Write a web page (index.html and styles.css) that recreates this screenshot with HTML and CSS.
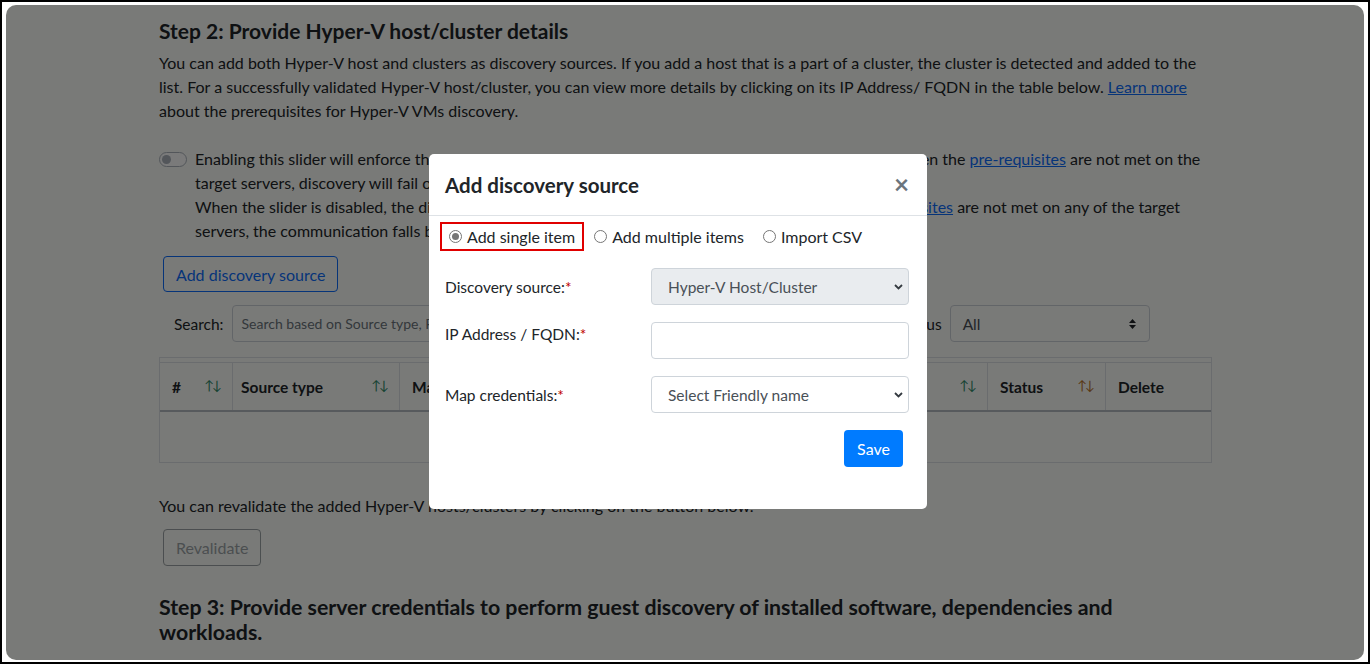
FILE: index.html
```html
<!DOCTYPE html>
<html lang="en">
<head>
<meta charset="utf-8">
<title>Add discovery source</title>
<link rel="stylesheet" href="styles.css">
</head>
<body>
<div class="frame">
  <div class="panel">
    <main class="page">
      <h2 class="step-title">Step 2: Provide Hyper-V host/cluster details</h2>
      <p class="intro">You can add both Hyper-V host and clusters as discovery sources. If you add a host that is a part of a cluster, the cluster is detected and added to the<br>list. For a successfully validated Hyper-V host/cluster, you can view more details by clicking on its IP Address/ FQDN in the table below. <a href="#">Learn more</a><br>about the prerequisites for Hyper-V VMs discovery.</p>

      <div class="toggle-row">
        <span class="switch"><span class="knob"></span></span>
        <p class="toggle-text">Enabling this slider will enforce the encrypted communication between appliance and guest servers. When the <a href="#">pre-requisites</a> are not met on the<br>target servers, discovery will fail on those servers.<br>When the slider is disabled, the discovery is attempted with encryption at first, and in case the <a href="#">pre-requisites</a> are not met on any of the target<br>servers, the communication falls back to unencrypted mode.</p>
      </div>

      <button class="btn-outline">Add discovery source</button>

      <div class="search-row">
        <span class="search-label">Search:</span>
        <div class="search-input">Search based on Source type, FQDN, Map credentials</div>
        <span class="status-label">Status</span>
        <div class="status-select">All
          <svg class="updown" width="9" height="12" viewBox="0 0 9 12"><path d="M4.5 1 L8 5 H1 Z M4.5 11 L8 7 H1 Z" fill="#212529"/></svg>
        </div>
      </div>

      <div class="table-wrap">
        <div class="thead">
          <div class="th c1"><span>#</span><span class="sort g">↑↓</span></div>
          <div class="th c2"><span>Source type</span><span class="sort g">↑↓</span></div>
          <div class="th c3"><span>Map credentials</span><span class="sort g">↑↓</span></div>
          <div class="th c4"><span>IP Address/FQDN</span><span class="sort g">↑↓</span></div>
          <div class="th c5"><span>Host count</span><span class="sort g">↑↓</span></div>
          <div class="th c6"><span>Status</span><span class="sort o">↑↓</span></div>
          <div class="th c7"><span>Delete</span></div>
        </div>
        <div class="tbody"></div>
      </div>

      <p class="reval-text">You can revalidate the added Hyper-V hosts/clusters by clicking on the button below.</p>
      <button class="btn-disabled">Revalidate</button>

      <h3 class="step3">Step 3: Provide server credentials to perform guest discovery of installed software, dependencies and<br>workloads.</h3>
    </main>

    <div class="backdrop"></div>

    <div class="modal">
      <div class="modal-header">
        <h4 class="modal-title">Add discovery source</h4>
        <span class="close">×</span>
      </div>
      <div class="modal-body">
        <div class="radio-row">
          <label class="radio selected"><span class="dot on"></span>Add single item</label>
          <label class="radio"><span class="dot"></span>Add multiple items</label>
          <label class="radio"><span class="dot"></span>Import CSV</label>
        </div>
        <div class="form-row r1">
          <span class="flabel">Discovery source:<em>*</em></span>
          <div class="field disabled">Hyper-V Host/Cluster
            <svg class="chev" width="9" height="6" viewBox="0 0 9 6"><path d="M1 1 L4.5 4.5 L8 1" fill="none" stroke="#343a40" stroke-width="1.8"/></svg>
          </div>
        </div>
        <div class="form-row r2">
          <span class="flabel">IP Address / FQDN:<em>*</em></span>
          <div class="field"></div>
        </div>
        <div class="form-row r3">
          <span class="flabel">Map credentials:<em>*</em></span>
          <div class="field">Select Friendly name
            <svg class="chev" width="9" height="6" viewBox="0 0 9 6"><path d="M1 1 L4.5 4.5 L8 1" fill="none" stroke="#343a40" stroke-width="1.8"/></svg>
          </div>
        </div>
        <div class="actions">
          <button class="btn-primary">Save</button>
        </div>
      </div>
    </div>
  </div>
</div>
</body>
</html>
```

FILE: styles.css
```css
* { box-sizing: border-box; }
html, body { margin: 0; padding: 0; }
body {
  width: 1370px;
  height: 664px;
  overflow: hidden;
  background: #ffffff;
  font-family: Lato, "Open Sans", sans-serif;
  color: #212529;
}
.frame {
  width: 1370px;
  height: 664px;
  border: 2px solid #000;
  padding: 3px 4px 2px 4px;
  background: #fff;
}
.panel {
  position: relative;
  height: 100%;
  border-radius: 10px;
  overflow: hidden;
  background: #fdfffa;
}
.page {
  margin-left: 153px;
  width: 1053px;
  padding-top: 13px;
}
a { color: #0d6efd; text-decoration: underline; }
.step-title {
  margin: 0;
  font-size: 21px;
  font-weight: 700;
  line-height: 26px;
}
.intro {
  margin: 7px 0 0 0;
  font-size: 16px;
  line-height: 24px;
}
.toggle-row {
  display: flex;
  margin-top: 24px;
}
.switch {
  flex: none;
  width: 28px;
  height: 15px;
  border: 1px solid #adb5bd;
  border-radius: 8px;
  margin: 5px 8px 0 0;
  position: relative;
  background: #fff;
}
.knob {
  position: absolute;
  left: 2px;
  top: 2px;
  width: 9px;
  height: 9px;
  border-radius: 50%;
  background: #adb5bd;
}
.toggle-text {
  margin: 0;
  font-size: 16px;
  line-height: 24px;
}
.btn-outline {
  display: block;
  margin: 13px 0 0 4px;
  height: 36px;
  padding: 0 12px;
  font-family: inherit;
  font-size: 16px;
  color: #0d6efd;
  background: transparent;
  border: 1px solid #0d6efd;
  border-radius: 4px;
}
.search-row {
  display: flex;
  align-items: center;
  margin-top: 13px;
  padding-left: 15px;
  height: 37px;
}
.search-label { font-size: 15.5px; }
.search-input {
  margin-left: 8px;
  width: 480px;
  height: 37px;
  border: 1px solid #ced4da;
  border-radius: 4px;
  padding: 0 9px;
  display: flex;
  align-items: center;
  font-size: 14px;
  color: #6c757d;
  white-space: nowrap;
  overflow: hidden;
}
.status-label {
  margin-left: 188px;
  font-size: 15.5px;
}
.status-select {
  margin-left: 8px;
  width: 200px;
  height: 37px;
  border: 1px solid #ced4da;
  border-radius: 4px;
  display: flex;
  align-items: center;
  justify-content: space-between;
  padding: 0 12px;
  font-size: 15.5px;
  color: #495057;
}
.table-wrap {
  margin-top: 15px;
  border: 1px solid #dee2e6;
  padding-top: 4px;
  height: 106px;
}
.thead {
  display: flex;
  height: 50px;
  border-top: 1px solid #dee2e6;
  border-bottom: 2px solid #b6bcc2;
}
.th {
  display: flex;
  justify-content: space-between;
  align-items: center;
  padding: 0 12px 0 12px;
  border-right: 1px solid #dee2e6;
  font-weight: 700;
  font-size: 15.5px;
  white-space: nowrap;
}
.th:last-child { border-right: 0; }
.c1 { width: 73px; }
.c2 { width: 167px; padding-left: 8px; }
.c3 { width: 230px; }
.c4 { width: 200px; }
.c5 { width: 158px; }
.c6 { width: 118px; }
.c7 { flex: 1; }
.sort {
  font-weight: 400;
  font-size: 13px;
  letter-spacing: -2px;
  margin-top: -4px;
}
.sort.g { color: #2f8a68; }
.sort.o { color: #b8732a; }
.tbody { height: 50px; }
.reval-text {
  margin: 31px 0 0 0;
  font-size: 16px;
  line-height: 24px;
}
.btn-disabled {
  display: block;
  margin: 11px 0 0 4px;
  height: 37px;
  padding: 0 12px;
  font-family: inherit;
  font-size: 16px;
  color: #6c757d;
  background: transparent;
  border: 1px solid #6c757d;
  border-radius: 4px;
  opacity: .65;
}
.step3 {
  margin: 29px 0 0 0;
  font-size: 21.3px;
  font-weight: 700;
  line-height: 25px;
}
.backdrop {
  position: absolute;
  inset: 0;
  background: rgba(0, 0, 0, .52);
}
.modal {
  position: absolute;
  left: 423px;
  top: 149px;
  width: 498px;
  height: 355px;
  background: #fff;
  border-radius: 5px;
}
.modal-header {
  display: flex;
  justify-content: space-between;
  align-items: center;
  height: 62px;
  padding: 0 18px 0 16px;
  border-bottom: 1px solid #dee2e6;
}
.modal-title {
  margin: 0;
  font-size: 20.5px;
  font-weight: 700;
  color: #212529;
}
.close {
  font-size: 26px;
  font-weight: 700;
  color: #6c757d;
  line-height: 1;
  margin-top: -2px;
}
.modal-body {
  padding: 6px 18px 0 16px;
}
.radio-row {
  display: flex;
  align-items: center;
  height: 29px;
  margin-left: -5px;
}
.radio {
  display: flex;
  align-items: center;
  font-size: 16px;
  color: #212529;
  margin-right: 19px;
}
.radio.selected {
  border: 2px solid #e00000;
  height: 29px;
  padding: 0 7px 0 7px;
  margin-right: 10px;
}
.dot {
  width: 13px;
  height: 13px;
  border: 1px solid #767676;
  border-radius: 50%;
  margin-right: 5px;
  position: relative;
}
.dot.on::after {
  content: "";
  position: absolute;
  left: 2px;
  top: 2px;
  width: 7px;
  height: 7px;
  border-radius: 50%;
  background: #767676;
}
.form-row {
  display: flex;
  justify-content: space-between;
}
.r1 { margin-top: 17px; align-items: center; }
.r2 { margin-top: 17px; }
.r3 { margin-top: 17px; align-items: center; }
.r2 .flabel { padding-top: 3px; }
.flabel {
  font-size: 15.5px;
  color: #212529;
}
.flabel em {
  font-style: normal;
  color: #c00000;
}
.field {
  width: 258px;
  height: 37px;
  border: 1px solid #ced4da;
  border-radius: 4px;
  display: flex;
  align-items: center;
  justify-content: space-between;
  padding: 0 5px 0 16px;
  font-size: 15.5px;
  color: #495057;
}
.field.disabled { background: #e9ecef; }
.actions {
  display: flex;
  justify-content: flex-end;
  margin-top: 17px;
  padding-right: 6px;
}
.btn-primary {
  height: 37px;
  width: 59px;
  border: 0;
  border-radius: 4px;
  background: #007bff;
  color: #fff;
  font-family: inherit;
  font-size: 16px;
}
```
